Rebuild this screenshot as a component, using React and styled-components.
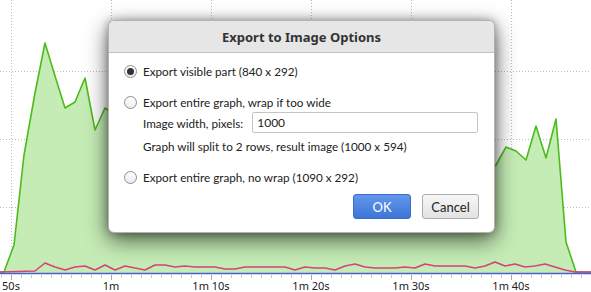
import React from "react";
import styled, { createGlobalStyle } from "styled-components";

const Global = createGlobalStyle`
  html, body { margin: 0; padding: 0; background: #fff; }
  body { font-family: "Noto Sans", "Open Sans", sans-serif; }
`;

const Stage = styled.div`
  position: relative;
  width: 591px;
  height: 292px;
  overflow: hidden;
  background: #fff;
`;

const ChartSvg = styled.svg`
  display: block;
`;

const Dialog = styled.div`
  position: absolute;
  left: 108px;
  top: 20px;
  width: 387px;
  height: 213px;
  box-sizing: border-box;
  background: #fff;
  border: 1px solid rgba(0, 0, 0, 0.3);
  border-radius: 6px;
  box-shadow: 0 7px 22px rgba(0, 0, 0, 0.62), 0 0 8px rgba(0, 0, 0, 0.3);
  display: flex;
  flex-direction: column;
  overflow: hidden;
  color: #222;
  font-family: Lato, "Noto Sans", sans-serif;
  font-size: 11.7px;
`;

const TitleBar = styled.div`
  height: 31px;
  flex: none;
  background: #e6e6e6;
  border-bottom: 1px solid #c3c3c3;
  display: flex;
  align-items: center;
  justify-content: center;
  font-family: "Noto Sans", sans-serif;
  font-weight: bold;
  font-size: 13px;
  color: #333;
`;

const Body = styled.div`
  display: flex;
  flex-direction: column;
  padding: 8px 15px 0 15px;
`;

const Row = styled.div`
  display: flex;
  align-items: center;
  height: ${(p) => p.$h || 20}px;
  margin-top: ${(p) => p.$mt || 0}px;
  padding-left: ${(p) => p.$indent || 0}px;
  gap: ${(p) => p.$gap ?? 6}px;
  white-space: nowrap;
`;

const Radio = styled.span`
  position: relative;
  width: 13px;
  height: 13px;
  box-sizing: border-box;
  border-radius: 50%;
  border: 1px solid #8e8e8e;
  background: linear-gradient(#ffffff, #ececec);
  flex: none;
  &::after {
    content: "";
    display: ${(p) => (p.$checked ? "block" : "none")};
    position: absolute;
    left: 2px;
    top: 2px;
    width: 7px;
    height: 7px;
    border-radius: 50%;
    background: #333;
  }
`;

const Input = styled.input`
  width: 226px;
  height: 21px;
  box-sizing: border-box;
  border: 1px solid #c4c4c4;
  border-radius: 2px;
  padding: 0 4px;
  font-family: inherit;
  font-size: 12px;
  color: #222;
  outline: none;
`;

const Buttons = styled.div`
  display: flex;
  justify-content: flex-end;
  gap: 11px;
  margin-top: 7px;
`;

const Button = styled.button`
  width: ${(p) => p.$w}px;
  height: 25px;
  box-sizing: border-box;
  border-radius: 3px;
  font-family: inherit;
  font-size: 13px;
  padding: 0;
  border: 1px solid ${(p) => (p.$primary ? "#3b6ccc" : "#acacac")};
  background: ${(p) =>
    p.$primary
      ? "linear-gradient(#6197ea, #3e75d6)"
      : "linear-gradient(#f7f7f7, #e2e2e2)"};
  color: ${(p) => (p.$primary ? "#fff" : "#222")};
`;

const green = [
  [0, 272], [4, 272], [14, 245], [24, 155], [35, 93], [45, 43], [55, 76], [65, 108],
  [75, 102], [85, 78], [95, 130], [105, 108], [115, 115], [125, 120], [135, 110],
  [145, 125], [155, 118], [165, 130], [175, 122], [185, 135], [195, 128], [205, 140],
  [215, 132], [225, 145], [235, 138], [245, 150], [255, 142], [265, 150], [275, 145],
  [285, 155], [295, 148], [305, 152], [315, 145], [325, 158], [335, 150], [345, 160],
  [355, 152], [365, 158], [375, 150], [385, 162], [395, 155], [405, 165], [415, 158],
  [425, 162], [435, 155], [445, 168], [455, 160], [465, 170], [475, 162], [485, 172],
  [496, 165], [506, 147], [516, 151], [526, 160], [536, 126], [546, 158], [556, 119],
  [566, 242], [576, 272], [591, 272],
];

const pink = [
  [0, 272], [35, 271], [45, 263], [55, 267], [65, 270], [75, 267], [85, 266], [95, 270],
  [105, 265], [115, 270], [125, 266], [135, 268], [145, 270], [155, 265], [165, 265],
  [175, 267], [185, 266], [195, 267], [205, 267], [215, 267], [225, 269], [235, 269],
  [245, 267], [255, 267], [265, 267], [275, 267], [285, 267], [295, 270], [305, 267],
  [315, 268], [325, 268], [335, 270], [345, 266], [355, 264], [365, 267], [375, 268],
  [385, 268], [395, 268], [405, 267], [415, 268], [425, 264], [435, 266], [445, 266],
  [455, 266], [465, 266], [475, 268], [485, 266], [495, 262], [505, 266], [515, 264],
  [525, 267], [535, 266], [545, 264], [555, 267], [565, 270], [575, 272], [591, 272],
];

const pts = (a) => a.map(([x, y]) => `${x},${y}`).join(" ");

const majors = [
  [11, "50s"], [111, "1m"], [211, "1m 10s"], [311, "1m 20s"], [411, "1m 30s"], [511, "1m 40s"],
];

function Chart() {
  const minors = [];
  for (let x = 1; x < 591; x += 10) minors.push(x);
  return (
    <ChartSvg width="591" height="292" viewBox="0 0 591 292">
      {[71, 139, 207].map((y) => (
        <line key={y} x1="0" x2="591" y1={y + 0.5} y2={y + 0.5} stroke="#bdbdbd" strokeDasharray="1 2" />
      ))}
      {majors.map(([x]) => (
        <line key={x} x1={x + 0.5} x2={x + 0.5} y1="0" y2="273" stroke="#bdbdbd" strokeDasharray="1 2" />
      ))}
      <polygon points={`${pts(green)} 591,273 0,273`} fill="#c5ecb5" />
      <polyline points={pts(green)} fill="none" stroke="#4cbb1c" strokeWidth="1.6" strokeLinejoin="round" />
      <polyline points={pts(pink)} fill="none" stroke="#d6437a" strokeWidth="1.6" strokeLinejoin="round" />
      <line x1="0" x2="591" y1="273.5" y2="273.5" stroke="#4b5bd6" strokeWidth="1.5" />
      {minors.map((x) => (
        <line key={x} x1={x + 0.5} x2={x + 0.5} y1="275" y2="278" stroke="#c8c8c8" />
      ))}
      {majors.map(([x]) => (
        <line key={"m" + x} x1={x + 0.5} x2={x + 0.5} y1="275" y2="280" stroke="#a8a8a8" />
      ))}
      {majors.map(([x, t]) => (
        <text key={"t" + x} x={x} y="290" textAnchor="middle" fontSize="11" fill="#222"
          fontFamily='"Noto Sans", "Open Sans", sans-serif'>
          {t}
        </text>
      ))}
    </ChartSvg>
  );
}

export default function App() {
  return (
    <>
      <Global />
      <Stage>
        <Chart />
        <Dialog>
          <TitleBar>Export to Image Options</TitleBar>
          <Body>
            <Row>
              <Radio $checked />
              <span>Export visible part (840 x 292)</span>
            </Row>
            <Row $mt={11}>
              <Radio />
              <span>Export entire graph, wrap if too wide</span>
            </Row>
            <Row $indent={19} $h={21} $gap={9}>
              <span>Image width, pixels:</span>
              <Input defaultValue="1000" />
            </Row>
            <Row $indent={19} $mt={3}>
              <span>Graph will split to 2 rows, result image (1000 x 594)</span>
            </Row>
            <Row $mt={11}>
              <Radio />
              <span>Export entire graph, no wrap (1090 x 292)</span>
            </Row>
            <Buttons>
              <Button $primary $w={58}>OK</Button>
              <Button $w={57}>Cancel</Button>
            </Buttons>
          </Body>
        </Dialog>
      </Stage>
    </>
  );
}
